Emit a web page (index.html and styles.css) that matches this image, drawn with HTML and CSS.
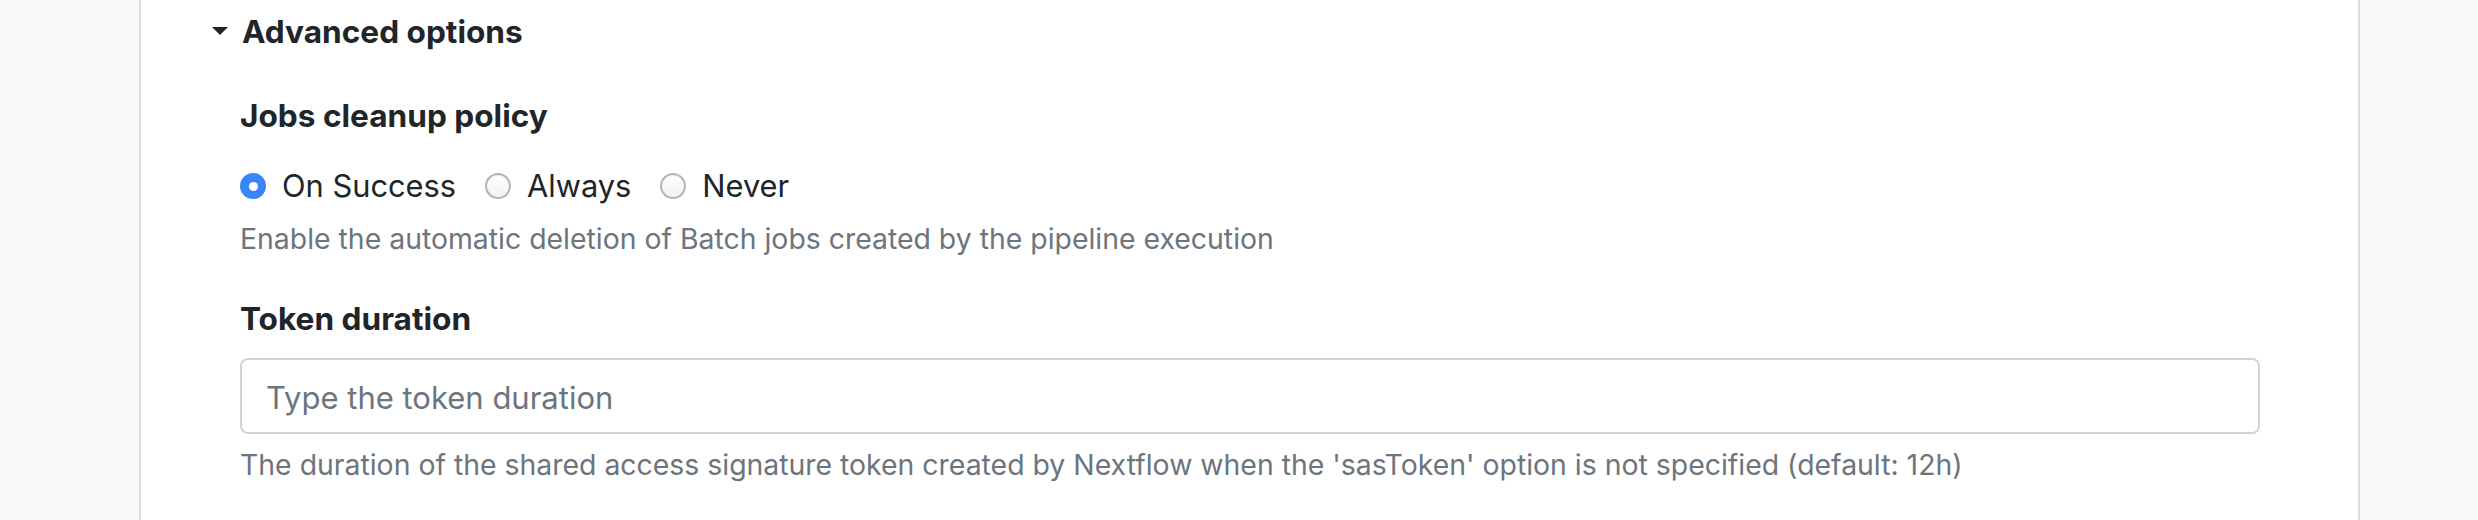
FILE: index.html
```html
<!DOCTYPE html>
<html>
<head>
<meta charset="utf-8">
<link rel="stylesheet" href="styles.css">
</head>
<body>
<div class="card">
  <div class="section-header">
    <span class="caret"></span>
    <span class="section-title">Advanced options</span>
  </div>

  <div class="field field-first">
    <div class="label">Jobs cleanup policy</div>
    <div class="radio-row">
      <label class="radio-item"><span class="radio checked"></span><span class="radio-text">On Success</span></label>
      <label class="radio-item"><span class="radio"></span><span class="radio-text">Always</span></label>
      <label class="radio-item"><span class="radio"></span><span class="radio-text">Never</span></label>
    </div>
    <div class="help help-radio">Enable the automatic deletion of Batch jobs created by the pipeline execution</div>
  </div>

  <div class="field field-second">
    <div class="label">Token duration</div>
    <input class="text-input" type="text" placeholder="Type the token duration">
    <div class="help help-input">The duration of the shared access signature token created by Nextflow when the 'sasToken' option is not specified (default: 12h)</div>
  </div>
</div>
</body>
</html>
```
FILE: styles.css
```css
html, body {
  margin: 0;
  padding: 0;
  height: 100%;
}
body {
  background: #f7f8fa;
  font-family: "Inter", "Liberation Sans", sans-serif;
  color: #212529;
}
.card {
  box-sizing: border-box;
  margin-left: 139px;
  width: 2221px;
  min-height: 100%;
  background: #ffffff;
  border-left: 2px solid #dcdde0;
  border-right: 2px solid #dcdde0;
  padding: 12px 98px 20px 99px;
}
.section-header {
  display: flex;
  align-items: center;
  margin-left: -28px;
  height: 40px;
}
.caret {
  width: 0;
  height: 0;
  border-left: 8px solid transparent;
  border-right: 8px solid transparent;
  border-top: 8px solid #212529;
  margin-right: 14px;
  margin-bottom: 3px;
}
.section-title {
  font-size: 31.6px;
  font-weight: 700;
  line-height: 40px;
}
.label {
  font-size: 31.6px;
  font-weight: 700;
  line-height: 40px;
}
.field-first {
  margin-top: 43.5px;
}
.field-second {
  margin-top: 42px;
}
.radio-row {
  display: flex;
  align-items: center;
  gap: 29px;
  margin-top: 30.5px;
  height: 40px;
}
.radio-item {
  display: flex;
  align-items: center;
}
.radio {
  box-sizing: border-box;
  width: 26px;
  height: 26px;
  border-radius: 50%;
  border: 2px solid #b4b4b4;
  background: linear-gradient(#ffffff, #f2f2f2);
  box-shadow: inset 0 1px 1px rgba(0,0,0,0.08);
  margin-right: 16px;
  display: flex;
  align-items: center;
  justify-content: center;
}
.radio.checked {
  border: none;
  background: #3a86f6;
  box-shadow: none;
}
.radio.checked::after {
  content: "";
  width: 9px;
  height: 9px;
  border-radius: 50%;
  background: #ffffff;
}
.radio-text {
  font-size: 30.8px;
  line-height: 40px;
  color: #212529;
}
.help {
  font-size: 28.4px;
  line-height: 36px;
  color: #6c757d;
}
.help-radio {
  margin-top: 14.5px;
}
.text-input {
  display: block;
  box-sizing: border-box;
  width: 100%;
  height: 76px;
  margin: 19.5px 0 0 0;
  border: 2px solid #ced4da;
  border-radius: 8px;
  padding: 3px 24px 0 24px;
  font-family: "Inter", "Liberation Sans", sans-serif;
  font-size: 31px;
  color: #212529;
  background: #ffffff;
  outline: none;
}
.text-input::placeholder {
  color: #6c757d;
  opacity: 1;
}
.help-input {
  margin-top: 12.5px;
}
```
